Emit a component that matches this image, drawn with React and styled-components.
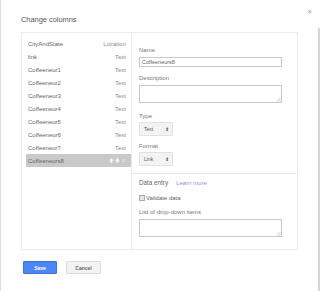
import React from "react";
import styled, { createGlobalStyle } from "styled-components";

const Global = createGlobalStyle`
  html, body { margin: 0; padding: 0; background: #fff; }
  body { font-family: "Liberation Sans", Arial, sans-serif; }
  * { box-sizing: border-box; }
`;

const Dialog = styled.div`
  position: relative;
  width: 320px;
  height: 291px;
  border-left: 1px solid #dcdcdc;
  padding: 0 0 0 20px;
  display: flex;
  flex-direction: column;
  &::after {
    content: "";
    position: absolute;
    right: 0;
    top: 28px;
    bottom: 0;
    width: 2px;
    background: #d6d6d6;
  }
`;

const Header = styled.div`
  height: 32px;
  display: flex;
  align-items: flex-start;
  justify-content: space-between;
`;

const Title = styled.div`
  margin-top: 15px;
  font-size: 7.4px;
  line-height: 9px;
  color: #555;
`;

const Close = styled.div`
  position: absolute;
  top: 8px;
  right: 8px;
  font-size: 8px;
  line-height: 8px;
  color: #999;
`;

const Box = styled.div`
  width: 277px;
  height: 218px;
  border: 1px solid #ebebeb;
  display: flex;
`;

const List = styled.div`
  width: 110px;
  border-right: 1px solid #ebebeb;
  padding: 4px 0 0 4px;
  display: flex;
  flex-direction: column;
`;

const Row = styled.div`
  height: 13px;
  display: flex;
  align-items: center;
  justify-content: space-between;
  padding: 0 5px 0 2px;
  font-size: 6px;
  color: #666;
  background: ${(p) => (p.$selected ? "#c9c9c9" : "transparent")};
`;

const RowType = styled.span`
  color: #8a8a8a;
`;

const RowIcons = styled.span`
  display: flex;
  align-items: center;
  gap: 1px;
`;

const Panel = styled.div`
  flex: 1;
  display: flex;
  flex-direction: column;
`;

const Section = styled.div`
  padding: 0 0 0 7px;
  display: flex;
  flex-direction: column;
`;

const Label = styled.div`
  margin-top: ${(p) => p.$mt || 0}px;
  font-size: 6px;
  line-height: 8px;
  color: #777;
`;

const Input = styled.div`
  margin-top: ${(p) => p.$mt || 0}px;
  width: 143px;
  height: 10px;
  border: 1px solid #c8c8c8;
  font-size: 5.5px;
  line-height: 8px;
  color: #666;
  padding-left: 2px;
`;

const TextArea = styled.div`
  position: relative;
  margin-top: ${(p) => p.$mt || 0}px;
  width: 143px;
  height: 18px;
  border: 1px solid #c8c8c8;
`;

const Grip = styled.svg`
  position: absolute;
  right: 0;
  bottom: 0;
`;

const Select = styled.div`
  margin-top: ${(p) => p.$mt || 0}px;
  width: 34px;
  height: 14px;
  background: #f3f3f3;
  border: 1px solid #e2e2e2;
  border-radius: 1px;
  display: flex;
  align-items: center;
  justify-content: space-between;
  padding: 0 3px 0 4px;
  font-size: 5px;
  color: #555;
`;

const Arrows = styled.span`
  font-size: 5px;
  color: #666;
`;

const Separator = styled.div`
  margin-top: 7px;
  height: 1px;
  background: #ebebeb;
`;

const DataEntry = styled.div`
  margin-top: 5px;
  display: flex;
  align-items: center;
  gap: 8px;
  font-size: 6.3px;
  line-height: 8px;
  color: #666;
`;

const Link = styled.span`
  color: #9090e0;
  font-size: 6px;
`;

const Check = styled.div`
  margin-top: 7px;
  display: flex;
  align-items: center;
  gap: 1px;
  font-size: 6px;
  line-height: 8px;
  color: #666;
`;

const Box6 = styled.span`
  width: 6px;
  height: 6px;
  border: 1px solid #aaa;
  background: #e6e6e6;
`;

const Buttons = styled.div`
  margin-top: 11px;
  padding-left: 2px;
  display: flex;
  gap: 9px;
`;

const Button = styled.div`
  width: ${(p) => p.$w}px;
  height: 13px;
  display: flex;
  align-items: center;
  justify-content: center;
  font-size: 5px;
  font-weight: bold;
  border-radius: 1px;
  color: ${(p) => (p.$primary ? "#fff" : "#666")};
  background: ${(p) => (p.$primary ? "#4d85f5" : "#f3f3f3")};
  border: 1px solid ${(p) => (p.$primary ? "#3b71e0" : "#dcdcdc")};
`;

const columns = [
  ["CityAndState", "Location"],
  ["link", "Text"],
  ["Coffeeneur1", "Text"],
  ["Coffeeneur2", "Text"],
  ["Coffeeneur3", "Text"],
  ["Coffeeneur4", "Text"],
  ["Coffeeneur5", "Text"],
  ["Coffeeneur6", "Text"],
  ["Coffeeneur7", "Text"],
];

const GripIcon = () => (
  <Grip width="5" height="5" viewBox="0 0 5 5">
    <path d="M4.5 1 L1 4.5 M4.5 3 L3 4.5" stroke="#aaa" strokeWidth="0.6" />
  </Grip>
);

export default function App() {
  return (
    <>
      <Global />
      <Dialog>
        <Header>
          <Title>Change columns</Title>
          <Close>×</Close>
        </Header>
        <Box>
          <List>
            {columns.map(([n, t]) => (
              <Row key={n}>
                <span>{n}</span>
                <RowType>{t}</RowType>
              </Row>
            ))}
            <Row $selected>
              <span>Coffeeneurs8</span>
              <RowIcons>
                <svg width="5" height="5" viewBox="0 0 5 5">
                  <path d="M2.5 0.3 L4.8 2.6 H3.4 V4.8 H1.6 V2.6 H0.2 Z" fill="#fff" />
                </svg>
                <svg width="5" height="5" viewBox="0 0 5 5">
                  <path d="M2.5 4.7 L4.8 2.4 H3.4 V0.2 H1.6 V2.4 H0.2 Z" fill="#fff" />
                </svg>
                <svg width="5" height="5" viewBox="0 0 5 5">
                  <path d="M1 1 L4 4 M4 1 L1 4" stroke="#e8e8e8" strokeWidth="0.7" />
                </svg>
              </RowIcons>
            </Row>
          </List>
          <Panel>
            <Section>
              <Label $mt={13}>Name</Label>
              <Input $mt={3}>Coffeeneurs8</Input>
              <Label $mt={7}>Description</Label>
              <TextArea $mt={3}>
                <GripIcon />
              </TextArea>
              <Label $mt={9}>Type</Label>
              <Select $mt={2}>
                <span>Text</span>
                <Arrows>⬍</Arrows>
              </Select>
              <Label $mt={6}>Format</Label>
              <Select $mt={2}>
                <span>Link</span>
                <Arrows>⬍</Arrows>
              </Select>
            </Section>
            <Separator />
            <Section>
              <DataEntry>
                <span>Data entry</span>
                <Link>Learn more</Link>
              </DataEntry>
              <Check>
                <Box6 />
                <span>Validate data</span>
              </Check>
              <Label $mt={6}>List of drop-down items</Label>
              <TextArea $mt={3}>
                <GripIcon />
              </TextArea>
            </Section>
          </Panel>
        </Box>
        <Buttons>
          <Button $primary $w={34}>Save</Button>
          <Button $w={35}>Cancel</Button>
        </Buttons>
      </Dialog>
    </>
  );
}
